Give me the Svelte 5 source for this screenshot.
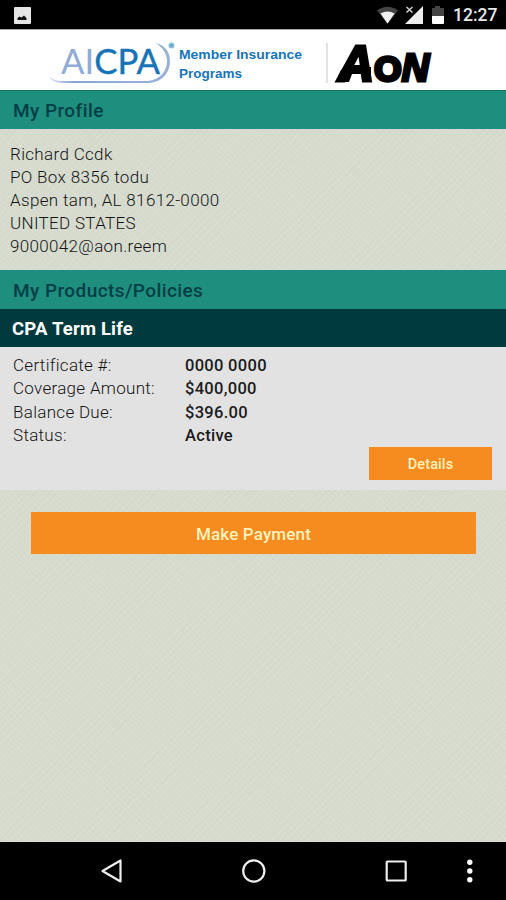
<script lang="ts">
  const address = [
    'Richard Ccdk',
    'PO Box 8356 todu',
    'Aspen tam, AL 81612-0000',
    'UNITED STATES',
    '9000042@aon.reem'
  ];

  const policy = {
    name: 'CPA Term Life',
    rows: [
      { label: 'Certificate #:', value: '0000 0000' },
      { label: 'Coverage Amount:', value: '$400,000' },
      { label: 'Balance Due:', value: '$396.00' },
      { label: 'Status:', value: 'Active' }
    ]
  };
</script>

<div class="screen">
  <div class="status-bar">
    <svg class="picture-icon" viewBox="0 0 17 17">
      <rect width="17" height="17" rx="1" fill="#e6e6e6" />
      <path d="M3.5 13v-2l2-1.5 2 1 2.5-2 2.5 2.5v2z" fill="#111" />
    </svg>
    <div class="status-right">
      <svg width="74" height="20" viewBox="0 0 74 20">
        <path d="M0 5.5Q10.5-2 21 5.5L10.5 19z" fill="#444" />
        <path d="M3.5 8.5Q10.5 4.5 17.5 8.5L10.5 18.5z" fill="#f2f2f2" />
        <path d="M46 1v18H28z" fill="#eee" />
        <path d="M28 0h9v9h-9z" fill="#000" />
        <path d="M29.5 2l6 5.5M35.5 2l-6 5.5" stroke="#ccc" stroke-width="1.6" />
        <path d="M58 1h5v2h4v8H55V3h3z" fill="#444" />
        <path d="M55 11h12v7a1 1 0 0 1-1 1H56a1 1 0 0 1-1-1z" fill="#fff" />
      </svg>
      <span class="clock">12:27</span>
    </div>
  </div>

  <header class="brand">
    <svg width="506" height="60" viewBox="0 30 506 60">
      <defs>
        <linearGradient id="swoosh" x1="0" x2="1">
          <stop offset="0" stop-color="#dfe6f4" />
          <stop offset="0.2" stop-color="#8aa5d3" />
          <stop offset="1" stop-color="#9ab1da" />
        </linearGradient>
      </defs>
      <path
        d="M48 76Q53 83 62 83H149C163 82 170 72 170 61C170 51 164 45 156 43C163 48 167 54 167 61C167 71 160 80 148 81H62Q54 81 48 76z"
        fill="url(#swoosh)"
      />
      <text class="aicpa" x="61" y="74" textLength="99" lengthAdjust="spacingAndGlyphs"><tspan class="light">AI</tspan>CPA</text>
      <circle cx="171.5" cy="45.5" r="3" fill="#8cc0da" />
      <circle cx="171.5" cy="45.5" r="1.2" fill="#5f9fc4" />
      <g class="tagline">
        <text x="179" y="59" textLength="123" lengthAdjust="spacingAndGlyphs">Member Insurance</text>
        <text x="179" y="78" textLength="63" lengthAdjust="spacingAndGlyphs">Programs</text>
      </g>
      <path d="M327 43v40" stroke="#e2e2e2" stroke-width="2" />
      <text class="aon" x="338" y="81"><tspan class="cap">A</tspan><tspan class="round" x="374.2">O</tspan><tspan class="last" x="401.8">N</tspan></text>
      <path d="M346 67h25v7h-19l-3 8h-9l3-6h-5l3-6z" />
    </svg>
  </header>

  <h2 class="section-title first">My Profile</h2>
  <div class="profile">
    {#each address as line}
      <p>{line}</p>
    {/each}
  </div>

  <h2 class="section-title">My Products/Policies</h2>
  <section class="policy">
    <h3>{policy.name}</h3>
    <dl>
      {#each policy.rows as row}
        <dt>{row.label}</dt>
        <dd>{row.value}</dd>
      {/each}
    </dl>
    <button class="details">Details</button>
  </section>

  <button class="payment">Make Payment</button>

  <nav class="nav-bar">
    <svg width="506" height="58" viewBox="0 0 506 58" fill="none" stroke="#eee" stroke-width="2.2">
      <path d="M120.5 18.5v21L102.5 29z" stroke-linejoin="round" />
      <circle cx="253.8" cy="29" r="10.6" />
      <rect x="386.7" y="19.5" width="19" height="19" rx="0.8" />
      <g fill="#fff" stroke="none">
        <circle cx="469.8" cy="20.3" r="2.7" />
        <circle cx="469.8" cy="29" r="2.7" />
        <circle cx="469.8" cy="37.8" r="2.7" />
      </g>
    </svg>
  </nav>
</div>

<style>
  :global(body) {
    margin: 0;
  }

  .screen {
    width: 506px;
    height: 900px;
    display: flex;
    flex-direction: column;
    overflow: hidden;
    font-family: Roboto, "Liberation Sans", sans-serif;
    background-color: #d7dbce;
    background-image:
      repeating-linear-gradient(45deg, rgba(255, 255, 255, 0.08) 0 1px, transparent 1px 4px),
      repeating-linear-gradient(-45deg, rgba(120, 135, 110, 0.04) 0 1px, transparent 1px 5px);
  }

  .status-bar {
    box-sizing: border-box;
    height: 30px;
    flex: none;
    display: flex;
    align-items: center;
    justify-content: space-between;
    padding: 1px 9px 0 14px;
    background: #000;
    border-bottom: 1px solid #aaa;
  }

  .picture-icon {
    width: 17px;
    height: 17px;
  }

  .status-right {
    display: flex;
    align-items: center;
  }

  .clock {
    width: 44px;
    margin-left: 2px;
    color: #e8e8e8;
    font-size: 17.5px;
    font-weight: 500;
    line-height: 20px;
    white-space: nowrap;
  }

  .brand {
    height: 60px;
    flex: none;
    background: #fff;
  }

  .brand svg,
  .nav-bar svg {
    display: block;
  }

  .brand svg {
    overflow: visible;
  }

  .aicpa {
    fill: #1673b8;
    stroke: #1673b8;
    stroke-width: 0.4px;
    font: 34.5px Lato, "Liberation Sans", sans-serif;
  }

  .aicpa .light {
    fill: #8fabd8;
    stroke: none;
  }

  .tagline {
    fill: #1874ba;
    font: bold 12.5px "Liberation Sans", sans-serif;
  }

  .aon {
    fill: #000;
    stroke: #000;
    font-family: "Liberation Sans", sans-serif;
    font-weight: bold;
  }

  .aon .cap {
    font-size: 50px;
    font-style: italic;
    stroke-width: 3px;
  }

  .aon .round {
    font-size: 35px;
    stroke-width: 3.5px;
  }

  .aon .last {
    font-size: 38px;
    font-style: italic;
    stroke-width: 3px;
  }

  .section-title {
    box-sizing: border-box;
    height: 39px;
    flex: none;
    margin: 0;
    padding: 1px 13px 0;
    background: #1e8e7e;
    color: #003e46;
    font-size: 19px;
    font-weight: 500;
    line-height: 39px;
    letter-spacing: 0.42px;
  }

  .section-title.first {
    border-top: 1px solid #167263;
    padding-top: 0;
  }

  .profile {
    box-sizing: border-box;
    height: 141px;
    flex: none;
    padding: 13.6px 10px 0;
    color: #141414;
    font-size: 17px;
    font-weight: 300;
    line-height: 23.2px;
    letter-spacing: 0.33px;
  }

  .profile p {
    margin: 0;
  }

  .policy {
    box-sizing: border-box;
    height: 181px;
    flex: none;
    display: flex;
    flex-direction: column;
    background: #e2e2e2;
  }

  .policy h3 {
    height: 38px;
    margin: 0;
    padding: 0 12px;
    background: #003a3e;
    color: #fff;
    font-size: 18.5px;
    font-weight: 700;
    line-height: 40px;
    letter-spacing: 0.2px;
  }

  dl {
    display: grid;
    grid-template-columns: 172px 1fr;
    margin: 0;
    padding: 7px 13px 0;
    color: #141414;
    font-size: 17px;
    font-weight: 300;
    line-height: 23.3px;
    letter-spacing: 0.3px;
  }

  dd {
    margin: 0;
    color: #1b1b1b;
    font-size: 16.5px;
    font-weight: 500;
    letter-spacing: 0.3px;
  }

  button {
    border: 0;
    background: #f68b20;
    color: #fff3bd;
    font-family: inherit;
    font-weight: 500;
  }

  .details {
    width: 123px;
    height: 33px;
    margin: 0 14px 0 auto;
    padding: 2px 0 0;
    font-size: 14.5px;
    letter-spacing: 0.1px;
  }

  .payment {
    height: 42px;
    flex: none;
    margin: 22px 30px 0 31px;
    padding: 2px 0 0;
    font-size: 17px;
    letter-spacing: 0.15px;
  }

  .nav-bar {
    box-sizing: border-box;
    height: 58px;
    flex: none;
    margin-top: auto;
    background: #000;
  }
</style>
